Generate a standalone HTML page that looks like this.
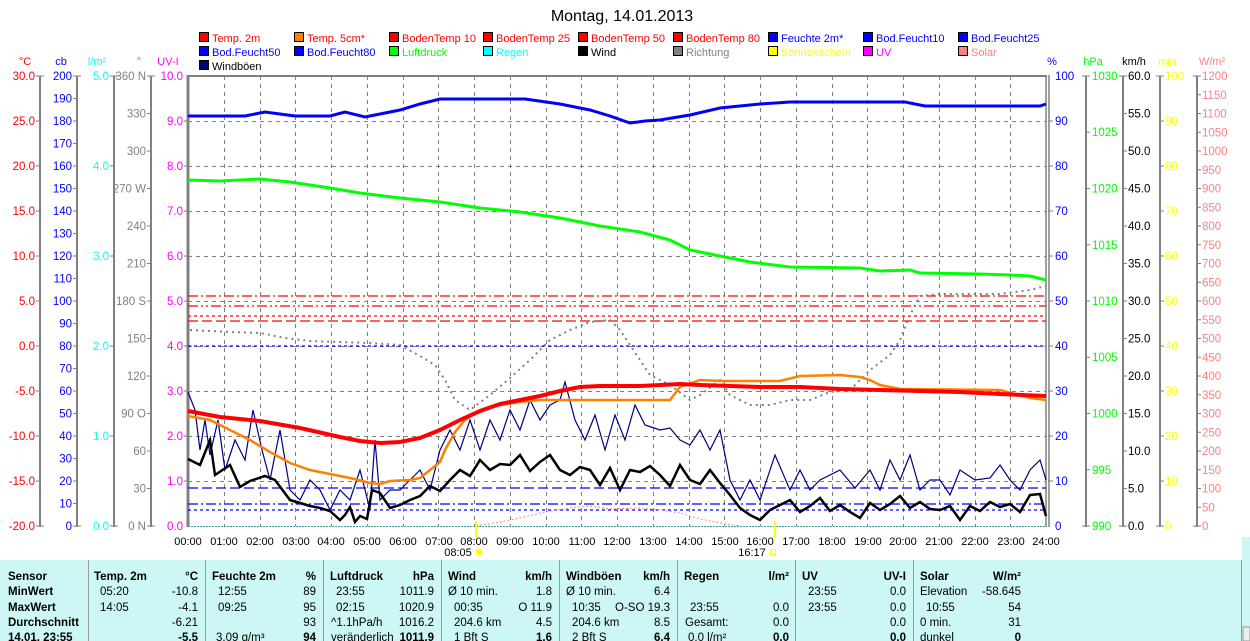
<!DOCTYPE html>
<html><head><meta charset="utf-8"><style>
body{margin:0;background:#fff;width:1250px;height:641px;overflow:hidden}
svg{display:block;font-family:"Liberation Sans",sans-serif}
</style></head><body>
<svg width="1250" height="641" viewBox="0 0 1250 641" xmlns="http://www.w3.org/2000/svg">
<text x="622" y="21" font-size="16" text-anchor="middle">Montag, 14.01.2013</text>
<g font-size="11">
<g stroke="#000" stroke-width="1">
<rect x="199.5" y="32.5" width="9" height="9" fill="#f00"/><rect x="294.5" y="32.5" width="9" height="9" fill="#ff8000"/><rect x="389.5" y="32.5" width="9" height="9" fill="#f00"/><rect x="483.5" y="32.5" width="9" height="9" fill="#f00"/><rect x="578.5" y="32.5" width="9" height="9" fill="#f00"/><rect x="673.5" y="32.5" width="9" height="9" fill="#f00"/><rect x="768.5" y="32.5" width="9" height="9" fill="#00f"/><rect x="863.5" y="32.5" width="9" height="9" fill="#00f"/><rect x="958.5" y="32.5" width="9" height="9" fill="#00f"/>
<rect x="199.5" y="46.5" width="9" height="9" fill="#00f"/><rect x="294.5" y="46.5" width="9" height="9" fill="#00f"/><rect x="389.5" y="46.5" width="9" height="9" fill="#0f0"/><rect x="483.5" y="46.5" width="9" height="9" fill="#0ff"/><rect x="578.5" y="46.5" width="9" height="9" fill="#000"/><rect x="673.5" y="46.5" width="9" height="9" fill="#808080"/><rect x="768.5" y="46.5" width="9" height="9" fill="#ff0"/><rect x="863.5" y="46.5" width="9" height="9" fill="#f0f"/><rect x="958.5" y="46.5" width="9" height="9" fill="#ff8080"/>
<rect x="199.5" y="60.5" width="9" height="9" fill="#000080"/>
</g>
<text x="212" y="42" fill="#f00">Temp. 2m</text><text x="307" y="42" fill="#f00">Temp. 5cm*</text><text x="402" y="42" fill="#f00">BodenTemp 10</text><text x="496" y="42" fill="#f00">BodenTemp 25</text><text x="591" y="42" fill="#f00">BodenTemp 50</text><text x="686" y="42" fill="#f00">BodenTemp 80</text><text x="781" y="42" fill="#00f">Feuchte 2m*</text><text x="876" y="42" fill="#00f">Bod.Feucht10</text><text x="971" y="42" fill="#00f">Bod.Feucht25</text>
<text x="212" y="56" fill="#00f">Bod.Feucht50</text><text x="307" y="56" fill="#00f">Bod.Feucht80</text><text x="402" y="56" fill="#0f0">Luftdruck</text><text x="496" y="56" fill="#0ff">Regen</text><text x="591" y="56" fill="#000">Wind</text><text x="686" y="56" fill="#808080">Richtung</text><text x="781" y="56" fill="#ff0">Sonnenschein</text><text x="876" y="56" fill="#f0f">UV</text><text x="971" y="56" fill="#ff8080">Solar</text>
<text x="212" y="70" fill="#000">Windböen</text>
</g>
<g font-size="11">
<text x="25" y="65" text-anchor="middle" fill="#f00">°C</text>
<text x="61" y="65" text-anchor="middle" fill="#00f">cb</text>
<text x="97" y="65" text-anchor="middle" fill="#0ff">l/m²</text>
<text x="139" y="65" text-anchor="middle" fill="#808080">°</text>
<text x="168" y="65" text-anchor="middle" fill="#f0f">UV-I</text>
<text x="1052" y="65" text-anchor="middle" fill="#00f">%</text>
<text x="1093" y="65" text-anchor="middle" fill="#0f0">hPa</text>
<text x="1134" y="65" text-anchor="middle" fill="#000">km/h</text>
<text x="1167" y="65" text-anchor="middle" fill="#ff0">min</text>
<text x="1212" y="65" text-anchor="middle" fill="#ff8080">W/m²</text>
</g>
<g stroke="#808080" stroke-width="2">
<line x1="40" y1="76" x2="40" y2="527"/><line x1="77" y1="76" x2="77" y2="527"/><line x1="114" y1="76" x2="114" y2="527"/><line x1="151" y1="76" x2="151" y2="527"/>
<line x1="1086" y1="76" x2="1086" y2="527"/><line x1="1123" y1="76" x2="1123" y2="527"/><line x1="1160" y1="76" x2="1160" y2="527"/><line x1="1197" y1="76" x2="1197" y2="527"/>
</g>
<g font-size="11.5" stroke="none">
<g fill="#f00" text-anchor="end">
<text x="35" y="80">30.0</text><text x="35" y="125">25.0</text><text x="35" y="170">20.0</text><text x="35" y="215">15.0</text><text x="35" y="260">10.0</text><text x="35" y="305">5.0</text><text x="35" y="350">0.0</text><text x="35" y="395">-5.0</text><text x="35" y="440">-10.0</text><text x="35" y="485">-15.0</text><text x="35" y="530">-20.0</text>
</g>
<g fill="#00f" text-anchor="end">
<text x="72" y="80">200</text><text x="72" y="102.5">190</text><text x="72" y="125">180</text><text x="72" y="147.5">170</text><text x="72" y="170">160</text><text x="72" y="192.5">150</text><text x="72" y="215">140</text><text x="72" y="237.5">130</text><text x="72" y="260">120</text><text x="72" y="282.5">110</text><text x="72" y="305">100</text><text x="72" y="327.5">90</text><text x="72" y="350">80</text><text x="72" y="372.5">70</text><text x="72" y="395">60</text><text x="72" y="417.5">50</text><text x="72" y="440">40</text><text x="72" y="462.5">30</text><text x="72" y="485">20</text><text x="72" y="507.5">10</text><text x="72" y="530">0</text>
</g>
<g fill="#0ff" text-anchor="end">
<text x="109" y="80">5.0</text><text x="109" y="170">4.0</text><text x="109" y="260">3.0</text><text x="109" y="350">2.0</text><text x="109" y="440">1.0</text><text x="109" y="530">0.0</text>
</g>
<g fill="#808080" text-anchor="end">
<text x="146" y="80">360 N</text><text x="146" y="117.5">330</text><text x="146" y="155">300</text><text x="146" y="192.5">270 W</text><text x="146" y="230">240</text><text x="146" y="267.5">210</text><text x="146" y="305">180 S</text><text x="146" y="342.5">150</text><text x="146" y="380">120</text><text x="146" y="417.5">90 O</text><text x="146" y="455">60</text><text x="146" y="492.5">30</text><text x="146" y="530">0 N</text>
</g>
<g fill="#f0f" text-anchor="end">
<text x="183" y="80">10.0</text><text x="183" y="125">9.0</text><text x="183" y="170">8.0</text><text x="183" y="215">7.0</text><text x="183" y="260">6.0</text><text x="183" y="305">5.0</text><text x="183" y="350">4.0</text><text x="183" y="395">3.0</text><text x="183" y="440">2.0</text><text x="183" y="485">1.0</text><text x="183" y="530">0.0</text>
</g>
<g fill="#00f">
<text x="1055" y="80">100</text><text x="1055" y="125">90</text><text x="1055" y="170">80</text><text x="1055" y="215">70</text><text x="1055" y="260">60</text><text x="1055" y="305">50</text><text x="1055" y="350">40</text><text x="1055" y="395">30</text><text x="1055" y="440">20</text><text x="1055" y="485">10</text><text x="1055" y="530">0</text>
</g>
<g fill="#0f0">
<text x="1092" y="80">1030</text><text x="1092" y="136">1025</text><text x="1092" y="192.5">1020</text><text x="1092" y="249">1015</text><text x="1092" y="305">1010</text><text x="1092" y="361">1005</text><text x="1092" y="417.5">1000</text><text x="1092" y="474">995</text><text x="1092" y="530">990</text>
</g>
<g fill="#000">
<text x="1128" y="80">60.0</text><text x="1128" y="117.5">55.0</text><text x="1128" y="155">50.0</text><text x="1128" y="192.5">45.0</text><text x="1128" y="230">40.0</text><text x="1128" y="267.5">35.0</text><text x="1128" y="305">30.0</text><text x="1128" y="342.5">25.0</text><text x="1128" y="380">20.0</text><text x="1128" y="417.5">15.0</text><text x="1128" y="455">10.0</text><text x="1128" y="492.5">5.0</text><text x="1128" y="530">0.0</text>
</g>
<g fill="#ff0">
<text x="1165" y="80">100</text><text x="1165" y="125">90</text><text x="1165" y="170">80</text><text x="1165" y="215">70</text><text x="1165" y="260">60</text><text x="1165" y="305">50</text><text x="1165" y="350">40</text><text x="1165" y="395">30</text><text x="1165" y="440">20</text><text x="1165" y="485">10</text><text x="1165" y="530">0</text>
</g>
<g fill="#ff8080">
<text x="1202" y="80">1200</text><text x="1202" y="98.75">1150</text><text x="1202" y="117.5">1100</text><text x="1202" y="136.25">1050</text><text x="1202" y="155">1000</text><text x="1202" y="173.75">950</text><text x="1202" y="192.5">900</text><text x="1202" y="211.25">850</text><text x="1202" y="230">800</text><text x="1202" y="248.75">750</text><text x="1202" y="267.5">700</text><text x="1202" y="286.25">650</text><text x="1202" y="305">600</text><text x="1202" y="323.75">550</text><text x="1202" y="342.5">500</text><text x="1202" y="361.25">450</text><text x="1202" y="380">400</text><text x="1202" y="398.75">350</text><text x="1202" y="417.5">300</text><text x="1202" y="436.25">250</text><text x="1202" y="455">200</text><text x="1202" y="473.75">150</text><text x="1202" y="492.5">100</text><text x="1202" y="511.25">50</text><text x="1202" y="530">0</text>
</g>
</g>
<g stroke="#808080" stroke-width="1">
<path d="M36 76h8M36 121h4M36 166h4M36 211h4M36 256h4M36 301h4M36 346h4M36 391h4M36 436h4M36 481h4M36 526h8"/>
<path d="M73 76h8M73 98.5h4M73 121h4M73 143.5h4M73 166h4M73 188.5h4M73 211h4M73 233.5h4M73 256h4M73 278.5h4M73 301h4M73 323.5h4M73 346h4M73 368.5h4M73 391h4M73 413.5h4M73 436h4M73 458.5h4M73 481h4M73 503.5h4M73 526h8"/>
<path d="M110 76h8M110 166h4M110 256h4M110 346h4M110 436h4M110 526h8"/>
<path d="M147 76h8M147 113.5h4M147 151h4M147 188.5h4M147 226h4M147 263.5h4M147 301h4M147 338.5h4M147 376h4M147 413.5h4M147 451h4M147 488.5h4M147 526h8"/>
<path d="M184 121h4M184 166h4M184 211h4M184 256h4M184 301h4M184 346h4M184 391h4M184 436h4M184 481h4"/>
<path d="M1048 121h5M1048 166h5M1048 211h5M1048 256h5M1048 301h5M1048 346h5M1048 391h5M1048 436h5M1048 481h5"/>
<path d="M1082 76h8M1086 132.25h4M1086 188.5h4M1086 244.75h4M1086 301h4M1086 357.25h4M1086 413.5h4M1086 469.75h4M1082 526h8"/>
<path d="M1119 76h8M1123 113.5h4M1123 151h4M1123 188.5h4M1123 226h4M1123 263.5h4M1123 301h4M1123 338.5h4M1123 376h4M1123 413.5h4M1123 451h4M1123 488.5h4M1119 526h8"/>
<path d="M1156 76h8M1160 121h4M1160 166h4M1160 211h4M1160 256h4M1160 301h4M1160 346h4M1160 391h4M1160 436h4M1160 481h4M1156 526h8"/>
<path d="M1193 76h8M1197 94.75h4M1197 113.5h4M1197 132.25h4M1197 151h4M1197 169.75h4M1197 188.5h4M1197 207.25h4M1197 226h4M1197 244.75h4M1197 263.5h4M1197 282.25h4M1197 301h4M1197 319.75h4M1197 338.5h4M1197 357.25h4M1197 376h4M1197 394.75h4M1197 413.5h4M1197 432.25h4M1197 451h4M1197 469.75h4M1197 488.5h4M1197 507.25h4M1193 526h8"/>
</g>
<g stroke="#808080" stroke-width="1" stroke-dasharray="4,4">
<path d="M188 121.5H1046M188 166.5H1046M188 211.5H1046M188 256.5H1046M188 301.5H1046M188 346.5H1046M188 391.5H1046M188 436.5H1046M188 481.5H1046"/>
<path d="M224.5 76V526M260.5 76V526M295.5 76V526M331.5 76V526M367.5 76V526M403.5 76V526M438.5 76V526M474.5 76V526M510.5 76V526M546.5 76V526M581.5 76V526M617.5 76V526M653.5 76V526M689.5 76V526M724.5 76V526M760.5 76V526M796.5 76V526M832.5 76V526M867.5 76V526M903.5 76V526M939.5 76V526M975.5 76V526M1010.5 76V526"/>
</g>
<g stroke="#808080" fill="none">
<path d="M188 76H1047" stroke-width="2"/>
<path d="M188 75V527" stroke-width="3"/>
<path d="M1046 75V527M1049 75V527" stroke-width="1.5"/>
<path d="M188 526.5H1046" stroke="#40a0a0" stroke-width="1" stroke-dasharray="2,1"/>
</g>
<g fill="none" stroke-width="1.3">
<path d="M188 296H1046" stroke="#f00" stroke-dasharray="10,3,2,3"/>
<path d="M188 306H1046" stroke="#f00" stroke-dasharray="10,3,2,3,2,3"/>
<path d="M188 316H1046" stroke="#f00" stroke-dasharray="3,3"/>
<path d="M188 321H1046" stroke="#f00" stroke-dasharray="10,4"/>
<path d="M188 346H1046" stroke="#00f" stroke-dasharray="3,3"/>
<path d="M188 488H1046" stroke="#00f" stroke-dasharray="10,4"/>
<path d="M188 504H1046" stroke="#00f" stroke-dasharray="10,3,2,3"/>
<path d="M188 510H1046" stroke="#00f" stroke-dasharray="3,3"/>
</g>
<polyline fill="none" stroke="#808080" stroke-width="2" stroke-dasharray="2,4" points="190,330 230,332 260,333 285,338 310,341 340,342 370,343 400,345 420,356 435,365 445,380 455,400 470,410 490,395 510,378 530,360 550,340 570,330 590,322 610,320 620,330 640,360 650,375 670,385 690,400 700,395 720,380 730,395 750,405 770,405 790,400 810,400 830,392 850,390 870,370 890,355 900,340 910,315 920,296 940,294 1000,294 1030,290 1046,286"/>
<polyline fill="none" stroke="#ff8080" stroke-width="1" stroke-dasharray="2,2" points="476,526 500,522 520,518 545,512 570,508 590,506 610,509 640,508 660,510 680,513 700,519 720,523 740,526"/>
<polyline fill="none" stroke="#00f" stroke-width="3" points="188,116 245,116 265,112 280,114 295,116 330,116 345,112 365,117 380,114 400,110 420,104 440,99 525,99 560,104 590,110 610,116 630,123 645,121 660,120 690,115 720,108 760,104 790,102 905,102 925,106 1040,106 1046,104"/>
<polyline fill="none" stroke="#0f0" stroke-width="3" points="188,180 220,181 260,179 290,182 330,188 360,193 400,198 440,202 480,208 520,212 560,218 600,226 640,232 670,240 690,250 720,256 750,262 790,267 860,268 880,271 910,270 920,273 980,274 1010,275 1030,276 1046,280"/>
<polyline fill="none" stroke="#000080" stroke-width="1.2" points="188,392 195,410 200,450 205,420 210,455 218,420 225,470 235,440 245,460 253,410 262,450 270,480 280,430 290,490 300,500 310,480 320,490 330,510 340,490 350,500 360,470 370,510 375,440 380,500 390,490 400,490 410,480 420,470 430,490 440,450 450,430 460,450 470,420 480,450 490,420 500,440 510,410 520,430 530,400 540,420 550,405 560,400 565,382 575,420 585,440 595,415 605,450 615,415 625,440 635,405 645,425 660,430 670,428 680,440 690,445 700,430 710,450 720,430 730,480 740,500 750,480 760,500 775,455 790,490 800,470 810,490 820,480 840,470 855,488 870,470 880,490 890,460 900,480 910,455 920,490 930,480 940,480 950,495 960,470 975,480 990,478 1000,465 1010,480 1020,490 1030,470 1040,460 1046,480"/>
<polyline fill="none" stroke="#000" stroke-width="2.5" points="188,459 200,465 210,440 215,475 230,465 240,487 250,481 265,476 275,480 290,500 300,503 310,506 320,508 330,511 340,520 345,515 350,507 355,522 360,516 367,519 372,490 380,493 390,508 400,505 410,500 420,496 430,486 440,491 450,480 460,470 470,476 480,460 490,470 500,464 510,465 520,455 530,471 540,462 550,455 560,470 570,475 580,467 590,470 600,485 610,468 620,490 630,470 640,472 650,466 660,475 670,486 680,465 690,480 700,484 710,470 720,483 730,495 740,508 750,515 760,520 770,510 780,505 790,500 800,512 810,506 820,498 830,511 840,505 850,512 860,518 870,503 880,510 890,504 900,496 910,508 920,502 930,509 940,510 950,506 960,520 970,506 980,511 990,502 1000,507 1010,504 1020,512 1030,495 1040,494 1046,516"/>
<polyline fill="none" stroke="#ff8000" stroke-width="2.5" points="188,416 210,420 230,430 250,440 270,452 290,463 310,470 330,474 350,478 370,483 380,484 390,481 410,480 420,478 430,470 440,462 445,450 455,432 465,420 480,410 500,405 520,402 540,400 560,400 670,400 680,387 700,380 720,381 780,381 800,376 840,375 860,377 870,380 880,385 900,389 1000,390 1030,398 1046,400"/>
<polyline fill="none" stroke="#f00" stroke-width="4" points="188,411 220,417 260,421 300,428 340,437 360,441 380,443 400,442 420,438 440,430 460,420 480,411 500,404 520,400 540,396 560,391 580,387 600,386 640,386 680,384 700,385 760,387 800,387 840,389 880,390 920,391 960,392 1000,394 1046,396"/>
<path d="M476 521V537M775 521V537" stroke="#ff0" stroke-width="2"/>
<g font-size="11" text-anchor="middle">
<text x="188" y="545">00:00</text><text x="224" y="545">01:00</text><text x="260" y="545">02:00</text><text x="296" y="545">03:00</text><text x="331" y="545">04:00</text><text x="367" y="545">05:00</text><text x="403" y="545">06:00</text><text x="439" y="545">07:00</text><text x="474" y="545">08:00</text><text x="510" y="545">09:00</text><text x="546" y="545">10:00</text><text x="582" y="545">11:00</text><text x="617" y="545">12:00</text><text x="653" y="545">13:00</text><text x="689" y="545">14:00</text><text x="725" y="545">15:00</text><text x="760" y="545">16:00</text><text x="796" y="545">17:00</text><text x="832" y="545">18:00</text><text x="868" y="545">19:00</text><text x="903" y="545">20:00</text><text x="939" y="545">21:00</text><text x="975" y="545">22:00</text><text x="1011" y="545">23:00</text><text x="1046" y="545">24:00</text>
<text x="458" y="556">08:05</text><text x="752" y="556">16:17</text>
</g>
<circle cx="479" cy="552" r="3.5" fill="#ff0"/>
<rect x="770.5" y="549.5" width="5" height="5" fill="none" stroke="#ff0"/>
<rect x="0" y="560" width="1241" height="81" fill="#ccf7f5"/>
<rect x="1242" y="537" width="8" height="104" fill="#ccf7f5"/>
<path d="M1241.5 560V641" stroke="#999"/>
<rect x="1243" y="627" width="7" height="14" fill="#eee" stroke="#999"/>
<g stroke="#999" stroke-width="1"><path d="M88.5 560V641M205.5 560V641M323.5 560V641M441.5 560V641M559.5 560V641M677.5 560V641M795.5 560V641M913.5 560V641"/></g>
<g font-size="11.5">
<g font-weight="bold">
<text x="8" y="580">Sensor</text><text x="8" y="595">MinWert</text><text x="8" y="611">MaxWert</text><text x="8" y="626">Durchschnitt</text><text x="8" y="641">14.01. 23:55</text>
<text x="94" y="580">Temp. 2m</text><text x="198" y="580" text-anchor="end">°C</text>
<text x="212" y="580">Feuchte 2m</text><text x="316" y="580" text-anchor="end">%</text>
<text x="330" y="580">Luftdruck</text><text x="434" y="580" text-anchor="end">hPa</text>
<text x="448" y="580">Wind</text><text x="552" y="580" text-anchor="end">km/h</text>
<text x="566" y="580">Windböen</text><text x="670" y="580" text-anchor="end">km/h</text>
<text x="684" y="580">Regen</text><text x="789" y="580" text-anchor="end">l/m²</text>
<text x="802" y="580">UV</text><text x="906" y="580" text-anchor="end">UV-I</text>
<text x="920" y="580">Solar</text><text x="1021" y="580" text-anchor="end">W/m²</text>
<text x="198" y="641" text-anchor="end">-5.5</text><text x="316" y="641" text-anchor="end">94</text><text x="434" y="641" text-anchor="end">1011.9</text><text x="552" y="641" text-anchor="end">1.6</text><text x="670" y="641" text-anchor="end">6.4</text><text x="789" y="641" text-anchor="end">0.0</text><text x="906" y="641" text-anchor="end">0.0</text><text x="1021" y="641" text-anchor="end">0</text>
</g>
<text x="100" y="595">05:20</text><text x="198" y="595" text-anchor="end">-10.8</text>
<text x="100" y="611">14:05</text><text x="198" y="611" text-anchor="end">-4.1</text>
<text x="198" y="626" text-anchor="end">-6.21</text>
<text x="218" y="595">12:55</text><text x="316" y="595" text-anchor="end">89</text>
<text x="218" y="611">09:25</text><text x="316" y="611" text-anchor="end">95</text>
<text x="316" y="626" text-anchor="end">93</text><text x="216" y="641">3.09 g/m³</text>
<text x="336" y="595">23:55</text><text x="434" y="595" text-anchor="end">1011.9</text>
<text x="336" y="611">02:15</text><text x="434" y="611" text-anchor="end">1020.9</text>
<text x="331" y="626">^1.1hPa/h</text><text x="434" y="626" text-anchor="end">1016.2</text><text x="331" y="641">veränderlich</text>
<text x="448" y="595">Ø 10 min.</text><text x="552" y="595" text-anchor="end">1.8</text>
<text x="454" y="611">00:35</text><text x="552" y="611" text-anchor="end">O 11.9</text>
<text x="454" y="626">204.6 km</text><text x="552" y="626" text-anchor="end">4.5</text><text x="454" y="641">1 Bft S</text>
<text x="566" y="595">Ø 10 min.</text><text x="670" y="595" text-anchor="end">6.4</text>
<text x="572" y="611">10:35</text><text x="670" y="611" text-anchor="end">O-SO 19.3</text>
<text x="572" y="626">204.6 km</text><text x="670" y="626" text-anchor="end">8.5</text><text x="572" y="641">2 Bft S</text>
<text x="690" y="611">23:55</text><text x="789" y="611" text-anchor="end">0.0</text>
<text x="685" y="626">Gesamt:</text><text x="789" y="626" text-anchor="end">0.0</text><text x="688" y="641">0.0 l/m²</text>
<text x="808" y="595">23:55</text><text x="906" y="595" text-anchor="end">0.0</text>
<text x="808" y="611">23:55</text><text x="906" y="611" text-anchor="end">0.0</text>
<text x="906" y="626" text-anchor="end">0.0</text>
<text x="920" y="595">Elevation</text><text x="1021" y="595" text-anchor="end">-58.645</text>
<text x="926" y="611">10:55</text><text x="1021" y="611" text-anchor="end">54</text>
<text x="920" y="626">0 min.</text><text x="1021" y="626" text-anchor="end">31</text><text x="920" y="641">dunkel</text>
</g>
</svg>
</body></html>
